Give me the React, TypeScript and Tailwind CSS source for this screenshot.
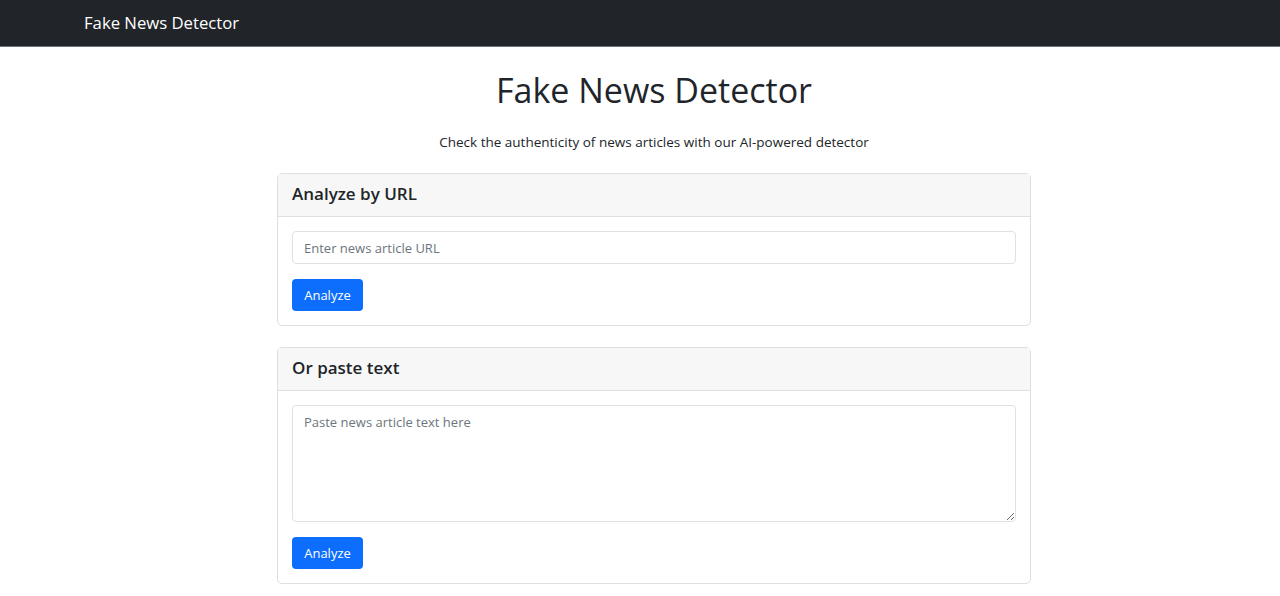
import React from 'react';

const font = { fontFamily: '"Open Sans", "Noto Sans", sans-serif' };

function Card({ title, children }: { title: string; children: React.ReactNode }) {
  return (
    <section className="rounded-[5px] border border-[#dfdfdf] bg-white">
      <div className="flex h-[43px] items-center border-b border-[#dfdfdf] bg-[#f7f7f7] px-[14px] pb-[3px]">
        <h2 className="text-[17px] font-semibold text-[#212529]">{title}</h2>
      </div>
      <div className="p-[14px]">{children}</div>
    </section>
  );
}

function AnalyzeButton() {
  return (
    <button
      type="button"
      className="mt-[15px] h-[32px] w-[71px] rounded-[4px] bg-[#0d6efd] pt-[1px] text-[13px] text-white"
    >
      Analyze
    </button>
  );
}

export default function App() {
  return (
    <div className="min-h-[596px] bg-white text-[#212529]" style={font}>
      <nav className="flex h-[47px] items-center border-b border-[#6c757d] bg-[#212529] pl-[84px]">
        <span className="text-[16.7px] text-white">Fake News Detector</span>
      </nav>

      <main className="ml-[277px] w-[754px] pb-[12px]">
        <h1 className="mt-[21px] text-center text-[34px] font-medium leading-[44px]">Fake News Detector</h1>
        <p className="mt-[21px] text-center text-[13.5px] leading-[18px]">
          Check the authenticity of news articles with our AI-powered detector
        </p>

        <div className="mt-[22px] grid gap-[21px]">
          <Card title="Analyze by URL">
            <input
              className="block h-[33px] w-full rounded-[4px] border border-[#dee2e6] px-[11px] text-[13px] outline-none placeholder:text-[#6c757d]"
              placeholder="Enter news article URL"
            />
            <AnalyzeButton />
          </Card>

          <Card title="Or paste text">
            <textarea
              className="block h-[117px] w-full resize-y rounded-[4px] border border-[#dee2e6] px-[11px] py-[7px] text-[13px] outline-none placeholder:text-[#6c757d]"
              placeholder="Paste news article text here"
            />
            <AnalyzeButton />
          </Card>
        </div>
      </main>
    </div>
  );
}
